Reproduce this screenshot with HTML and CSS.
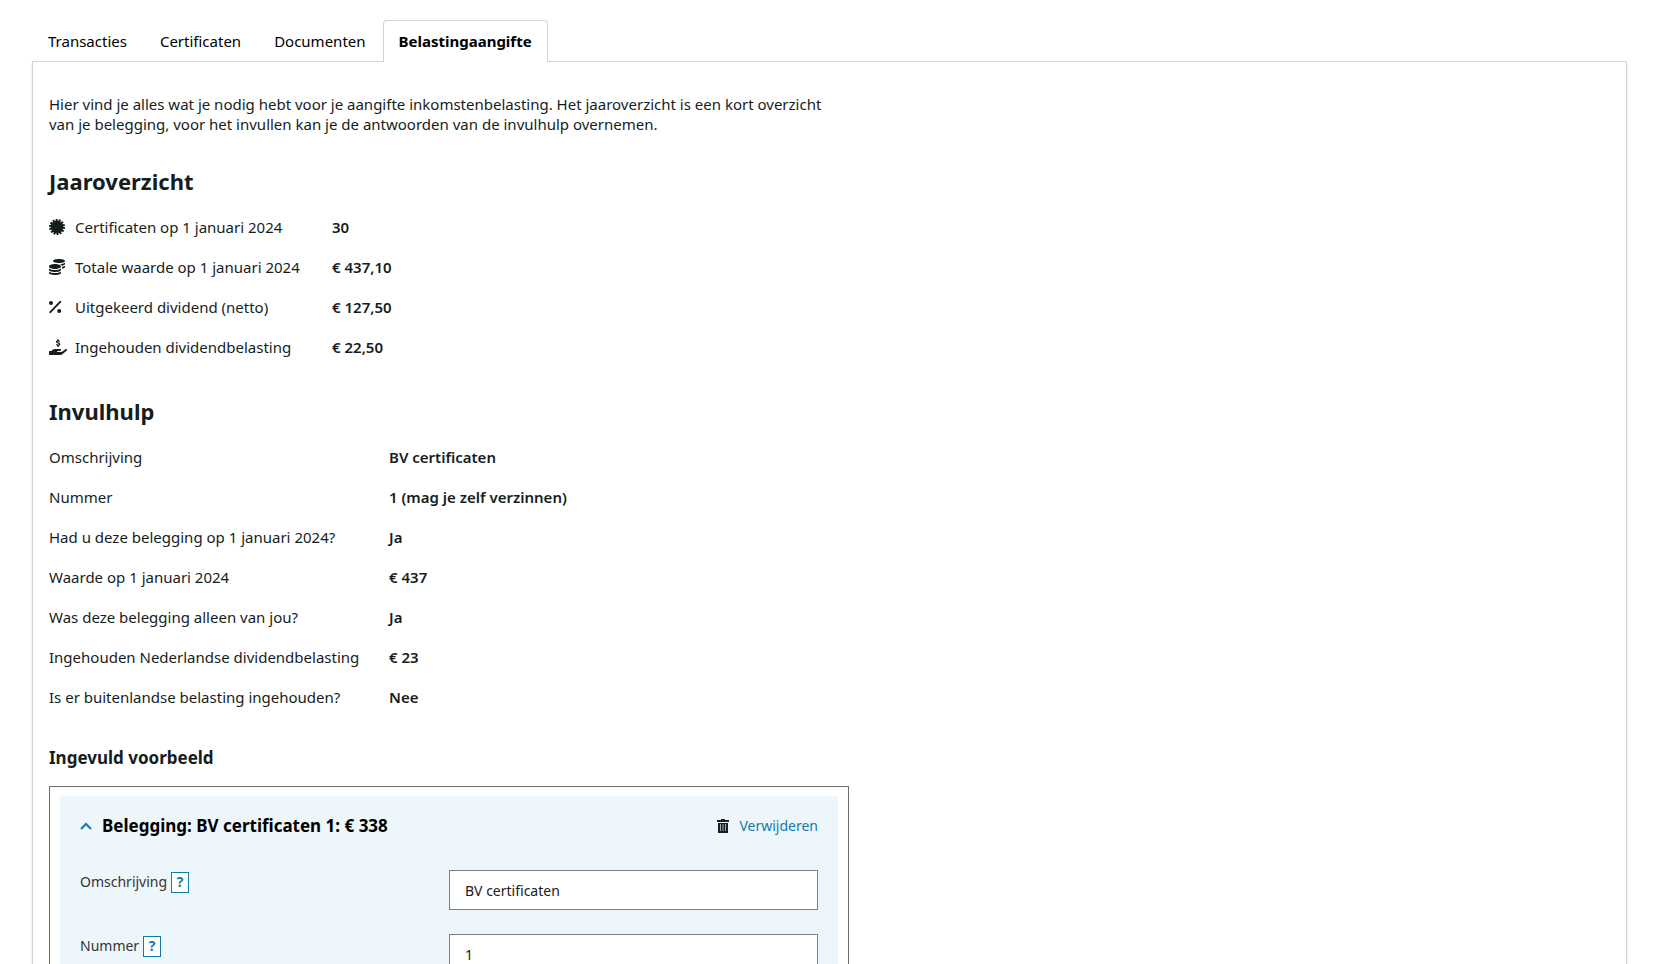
FILE: index.html
```
<!DOCTYPE html>
<html lang="nl">
<head>
    <meta charset="utf-8">
    <title>Belastingaangifte</title>
    <link rel="stylesheet" href="styles.css">
</head>
<body>
    <div class="tabs" role="tablist">
        <button class="tab" role="tab">Transacties</button>
        <button class="tab" role="tab">Certificaten</button>
        <button class="tab" role="tab">Documenten</button>
        <button class="tab active" role="tab" aria-selected="true">Belastingaangifte</button>
    </div>

    <main class="panel">
        <p class="intro">Hier vind je alles wat je nodig hebt voor je aangifte inkomstenbelasting. Het jaaroverzicht is een kort overzicht van je belegging, voor het invullen kan je de antwoorden van de invulhulp overnemen.</p>

        <h2>Jaaroverzicht</h2>
        <table class="overview year">
            <tr>
                <th scope="row">
                    <span class="label">
                        <svg class="icon" viewBox="0 0 16 16" preserveAspectRatio="xMinYMid"><circle cx="8" cy="8" r="6.4"/><circle cx="8" cy="8" r="6.8" fill="none" stroke="currentColor" stroke-width="2.4" stroke-dasharray="1.9 1.151"/></svg>
                        Certificaten op 1 januari 2024
                    </span>
                </th>
                <td>30</td>
            </tr>
            <tr>
                <th scope="row">
                    <span class="label">
                        <svg class="icon" viewBox="0 0 512 512" preserveAspectRatio="xMinYMid"><path d="M0 405.3V448c0 35.3 86 64 192 64s192-28.700 192-64v-42.700C342.700 434.400 267.200 448 192 448S41.300 434.400 0 405.300zM320 128c106 0 192-28.700 192-64S426 0 320 0 128 28.700 128 64s86 64 192 64zM0 300.400V352c0 35.300 86 64 192 64s192-28.700 192-64v-51.600c-41.300 34-116.900 51.600-192 51.600S41.300 334.400 0 300.400zm416 11c57.300-11.100 96-31.700 96-55.400v-42.700c-23.200 16.400-57.300 27.600-96 34.500v63.600zM192 160C86 160 0 195.800 0 240s86 80 192 80 192-35.800 192-80-86-80-192-80zm219.300 56.300c60-10.800 100.700-32 100.700-56.300v-42.700c-35.500 25.100-96.500 38.600-160.700 41.800 29.500 14.300 51.200 33.500 60 57.200z"/></svg>
                        Totale waarde op 1 januari 2024
                    </span>
                </th>
                <td>€ 437,10</td>
            </tr>
            <tr>
                <th scope="row">
                    <span class="label">
                        <svg class="icon" viewBox="0 0 16 16" preserveAspectRatio="xMinYMid"><circle cx="2" cy="4" r="2"/><circle cx="10.200" cy="12" r="2"/><path d="M1.300 13.200L11.200 2.800" fill="none" stroke="currentColor" stroke-width="1.900" stroke-linecap="round"/></svg>
                        Uitgekeerd dividend (netto)
                    </span>
                </th>
                <td>€ 127,50</td>
            </tr>
            <tr>
                <th scope="row">
                    <span class="label">
                        <svg class="icon" viewBox="0 0 576 512"><path d="M565.300 328.100c-11.800-10.700-30.200-10-42.600 0L430.300 402c-11.300 9.100-25.400 14-40 14H272c-8.800 0-16-7.200-16-16s7.200-16 16-16h78.300c15.900 0 30.700-10.900 33.300-26.600 3.300-20-12.100-37.400-31.600-37.400H192c-27 0-53.100 9.300-74.100 26.300L71.400 384H16c-8.800 0-16 7.200-16 16v96c0 8.800 7.200 16 16 16h356.800c14.500 0 28.600-4.900 40-14L564 377c15.200-12.100 16.400-35.300 1.300-48.900z"/><path d="M340 78c-30-28-98-26-98 12 0 46 98 26 98 74 0 40-68 44-104 14M288 4v44M288 208v44" fill="none" stroke="currentColor" stroke-width="44"/></svg>
                        Ingehouden dividendbelasting
                    </span>
                </th>
                <td>€ 22,50</td>
            </tr>
        </table>

        <h2>Invulhulp</h2>
        <table class="overview help">
            <tr><th scope="row">Omschrijving</th><td>BV certificaten</td></tr>
            <tr><th scope="row">Nummer</th><td>1 (mag je zelf verzinnen)</td></tr>
            <tr><th scope="row">Had u deze belegging op 1 januari 2024?</th><td>Ja</td></tr>
            <tr><th scope="row">Waarde op 1 januari 2024</th><td>€ 437</td></tr>
            <tr><th scope="row">Was deze belegging alleen van jou?</th><td>Ja</td></tr>
            <tr><th scope="row">Ingehouden Nederlandse dividendbelasting</th><td>€ 23</td></tr>
            <tr><th scope="row">Is er buitenlandse belasting ingehouden?</th><td>Nee</td></tr>
        </table>

        <h3>Ingevuld voorbeeld</h3>
        <div class="example">
            <div class="card">
                <div class="card-head">
                    <svg class="chevron" viewBox="0 0 12 8"><path d="M1 7l5-5 5 5"/></svg>
                    <h4>Belegging: BV certificaten 1: € 338</h4>
                    <a class="remove" href="#">
                        <svg class="trash" viewBox="0 0 12 14"><path d="M4 0h4v1h4v2H0V1h4zM1 4h10v10H1z"/><path class="bars" d="M3.500 5v7M6 5v7M8.500 5v7"/></svg>
                        Verwijderen
                    </a>
                </div>
                <div class="field">
                    <div class="field-label">
                        <label for="description">Omschrijving</label>
                        <button class="info">?</button>
                    </div>
                    <input id="description" type="text" value="BV certificaten">
                </div>
                <div class="field">
                    <div class="field-label">
                        <label for="number">Nummer</label>
                        <button class="info">?</button>
                    </div>
                    <input id="number" type="text" value="1">
                </div>
            </div>
        </div>
    </main>
</body>
</html>
```
FILE: styles.css
```
* {
    box-sizing: border-box;
}

body {
    margin: 0;
    padding: 20px 32px 0;
    height: 100vh;
    overflow: hidden;
    background: #fff;
    color: #161d1d;
    font-family: "Noto Sans", sans-serif;
    font-size: 15px;
    line-height: 20px;
}

.tabs {
    display: flex;
    gap: 1px;
    position: relative;
}

.tab {
    height: 42px;
    padding: 0 15px 2px;
    border: 1px solid transparent;
    border-bottom: none;
    border-radius: 4px 4px 0 0;
    background: none;
    color: #000;
    font: inherit;
    cursor: pointer;
}

.tab.active {
    background: #fff;
    border-color: #d3d3d3;
    font-weight: bold;
}

.panel {
    margin-top: -1px;
    padding: 32px 16px;
    border: 1px solid #d3d3d3;
    box-shadow: 0 2px 2px rgba(0, 0, 0, 0.15);
}

.intro {
    max-width: 800px;
    margin: 0 0 31px;
}

h2 {
    margin: 0 0 10px;
    font-size: 22px;
    line-height: 32px;
}

h3 {
    margin: 29px 0 16px;
    font-size: 17px;
    line-height: 24px;
}

.overview {
    border-collapse: collapse;
}

.overview th,
.overview td {
    height: 40px;
    padding: 0;
    text-align: left;
}

.overview th {
    font-weight: normal;
    white-space: nowrap;
}

.overview td {
    font-weight: 600;
}

.year {
    margin-bottom: 28px;
}

.year th {
    width: 283px;
}

.help th {
    width: 340px;
}

.label {
    display: flex;
    align-items: center;
    gap: 8px;
}

.icon {
    width: 18px;
    height: 16px;
    fill: currentColor;
}

.example {
    max-width: 800px;
    padding: 9px 10px;
    border: 1px solid #6a6e6e;
}

.card {
    padding: 20px;
    border-radius: 4px;
    background: #edf6fb;
    color: #333;
    font-size: 14px;
}

.card-head {
    display: flex;
    align-items: center;
    gap: 10px;
    margin-bottom: 34px;
}

.card-head h4 {
    flex: 1;
    margin: 0;
    color: #000;
    font-size: 17px;
}

.chevron {
    width: 12px;
    height: 8px;
    fill: none;
    stroke: #147aa8;
    stroke-width: 2;
}

.remove {
    display: flex;
    align-items: center;
    gap: 10px;
    color: #147aa8;
    text-decoration: none;
}

.trash {
    width: 12px;
    height: 14px;
    fill: #1d2020;
}

.bars {
    stroke: #9cb0b8;
}

.field {
    display: flex;
    justify-content: space-between;
    margin-bottom: 24px;
}

.field-label {
    display: flex;
    align-items: center;
    gap: 4px;
    height: 24px;
}

.info {
    width: 18px;
    height: 21px;
    padding: 0;
    border: 1px solid #147aa8;
    background: #fff;
    color: #147aa8;
    font: inherit;
    font-weight: bold;
    line-height: 16px;
}

.field input {
    width: 50%;
    height: 40px;
    padding: 0 15px;
    border: 1px solid #7b8282;
    border-radius: 0;
    background: #fff;
    color: #1d2020;
    font: inherit;
}
```
